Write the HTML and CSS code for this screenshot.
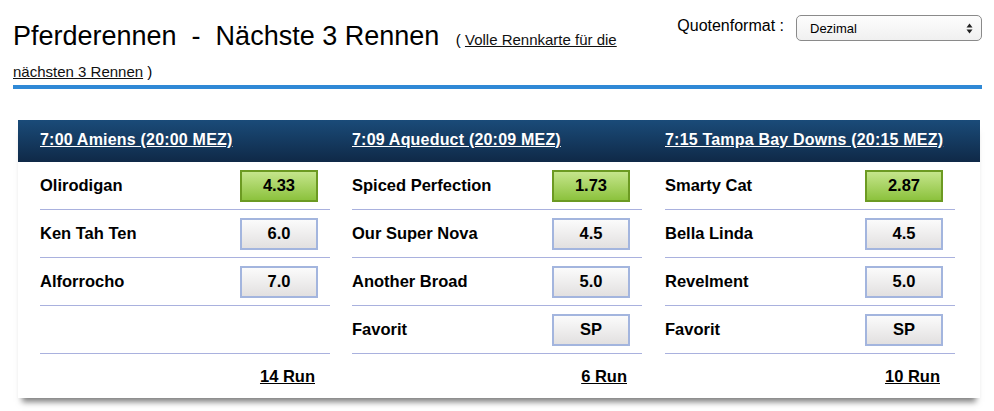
FILE: index.html
```html
<!DOCTYPE html>
<html lang="de">
<head>
    <meta charset="UTF-8">
    <title>Pferderennen - Nächste 3 Rennen</title>
    <link rel="stylesheet" href="styles.css">
</head>
<body>
<div class="page">
    <div class="top">
        <h1 class="title">Pferderennen&nbsp; - &nbsp;Nächste 3 Rennen <span class="title-link">( <a href="#">Volle Rennkarte für die nächsten 3 Rennen</a> )</span></h1>
        <div class="format">
            <span class="format-label">Quotenformat :</span>
            <div class="select">
                <span>Dezimal</span>
                <svg width="7" height="11" viewBox="0 0 7 11"><path d="M3.5 0.5 L6.5 4.5 L0.5 4.5 Z M3.5 10.5 L6.5 6.5 L0.5 6.5 Z" fill="#222"/></svg>
            </div>
        </div>
    </div>
    <div class="blue-bar"></div>

    <div class="races">
        <div class="race">
            <div class="race-head"><a href="#">7:00 Amiens (20:00 MEZ)</a></div>
            <div class="row"><span class="name">Olirodigan</span><span class="odds fav">4.33</span></div>
            <div class="row"><span class="name">Ken Tah Ten</span><span class="odds">6.0</span></div>
            <div class="row"><span class="name">Alforrocho</span><span class="odds">7.0</span></div>
            <div class="row"></div>
            <div class="race-foot"><a href="#">14 Run</a></div>
        </div>
        <div class="race">
            <div class="race-head"><a href="#">7:09 Aqueduct (20:09 MEZ)</a></div>
            <div class="row"><span class="name">Spiced Perfection</span><span class="odds fav">1.73</span></div>
            <div class="row"><span class="name">Our Super Nova</span><span class="odds">4.5</span></div>
            <div class="row"><span class="name">Another Broad</span><span class="odds">5.0</span></div>
            <div class="row"><span class="name">Favorit</span><span class="odds">SP</span></div>
            <div class="race-foot"><a href="#">6 Run</a></div>
        </div>
        <div class="race">
            <div class="race-head"><a href="#">7:15 Tampa Bay Downs (20:15 MEZ)</a></div>
            <div class="row"><span class="name">Smarty Cat</span><span class="odds fav">2.87</span></div>
            <div class="row"><span class="name">Bella Linda</span><span class="odds">4.5</span></div>
            <div class="row"><span class="name">Revelment</span><span class="odds">5.0</span></div>
            <div class="row"><span class="name">Favorit</span><span class="odds">SP</span></div>
            <div class="race-foot"><a href="#">10 Run</a></div>
        </div>
    </div>
</div>
</body>
</html>
```

FILE: styles.css
```css
* {
    margin: 0;
    padding: 0;
    box-sizing: border-box;
}

body {
    font-family: "Liberation Sans", Arial, sans-serif;
    color: #000;
    background: #fff;
    min-height: 411px;
}

a {
    color: inherit;
}

.page {
    padding: 0 12px 13px 13px;
}

.top {
    display: flex;
    justify-content: space-between;
    height: 85px;
}

.title {
    width: 660px;
    padding-top: 22px;
    font-size: 27px;
    font-weight: normal;
    line-height: 29px;
}

.title-link {
    font-size: 15px;
    margin-left: 9px;
}

.title-link a {
    color: #111;
}

.format {
    display: flex;
    align-items: center;
    height: 26px;
    margin-top: 15px;
}

.format-label {
    font-size: 16px;
    margin-right: 12px;
    position: relative;
    top: -2px;
}

.select {
    width: 186px;
    height: 26px;
    border: 1px solid #8a8a8a;
    border-radius: 5px;
    background: linear-gradient(#fdfdfd, #f0f0f0);
    display: flex;
    align-items: center;
    justify-content: space-between;
    padding: 0 8px 0 13px;
    font-size: 13px;
}

.blue-bar {
    height: 4px;
    background: #2f89d6;
}

.races {
    display: grid;
    grid-template-columns: 312px 312px 1fr;
    margin: 31px 2px 0 5px;
    background: #fff;
    box-shadow: 0 8px 6px -4px rgba(0, 0, 0, 0.5);
}

.race-head {
    height: 42px;
    padding: 11px 0 0 22px;
    background: linear-gradient(#1a4b79, #0f2947);
    font-size: 16px;
    letter-spacing: 0.2px;
    font-weight: bold;
    white-space: nowrap;
}

.race-head a {
    color: #fff;
}

.race:last-child .race-head {
    padding-left: 23px;
}

.row,
.race-foot {
    margin-left: 22px;
}

.race:last-child .row,
.race:last-child .race-foot {
    margin-left: 23px;
    margin-right: 25px;
}

.row {
    height: 48px;
    border-bottom: 1px solid #a9b1de;
    display: flex;
    align-items: center;
    justify-content: space-between;
    padding-right: 12px;
    font-size: 16.5px;
    font-weight: bold;
}

.odds {
    width: 78px;
    height: 32px;
    border: 2px solid #a3b5de;
    background: linear-gradient(#fbfbfb, #e2e0e0);
    display: flex;
    align-items: center;
    justify-content: center;
    font-size: 16.5px;
}

.odds.fav {
    border-color: #6c9a22;
    background: linear-gradient(#c5e58c, #8cc23d);
}

.race-foot {
    height: 44px;
    display: flex;
    align-items: center;
    justify-content: flex-end;
    padding-right: 15px;
    font-size: 16.5px;
    font-weight: bold;
}
```
